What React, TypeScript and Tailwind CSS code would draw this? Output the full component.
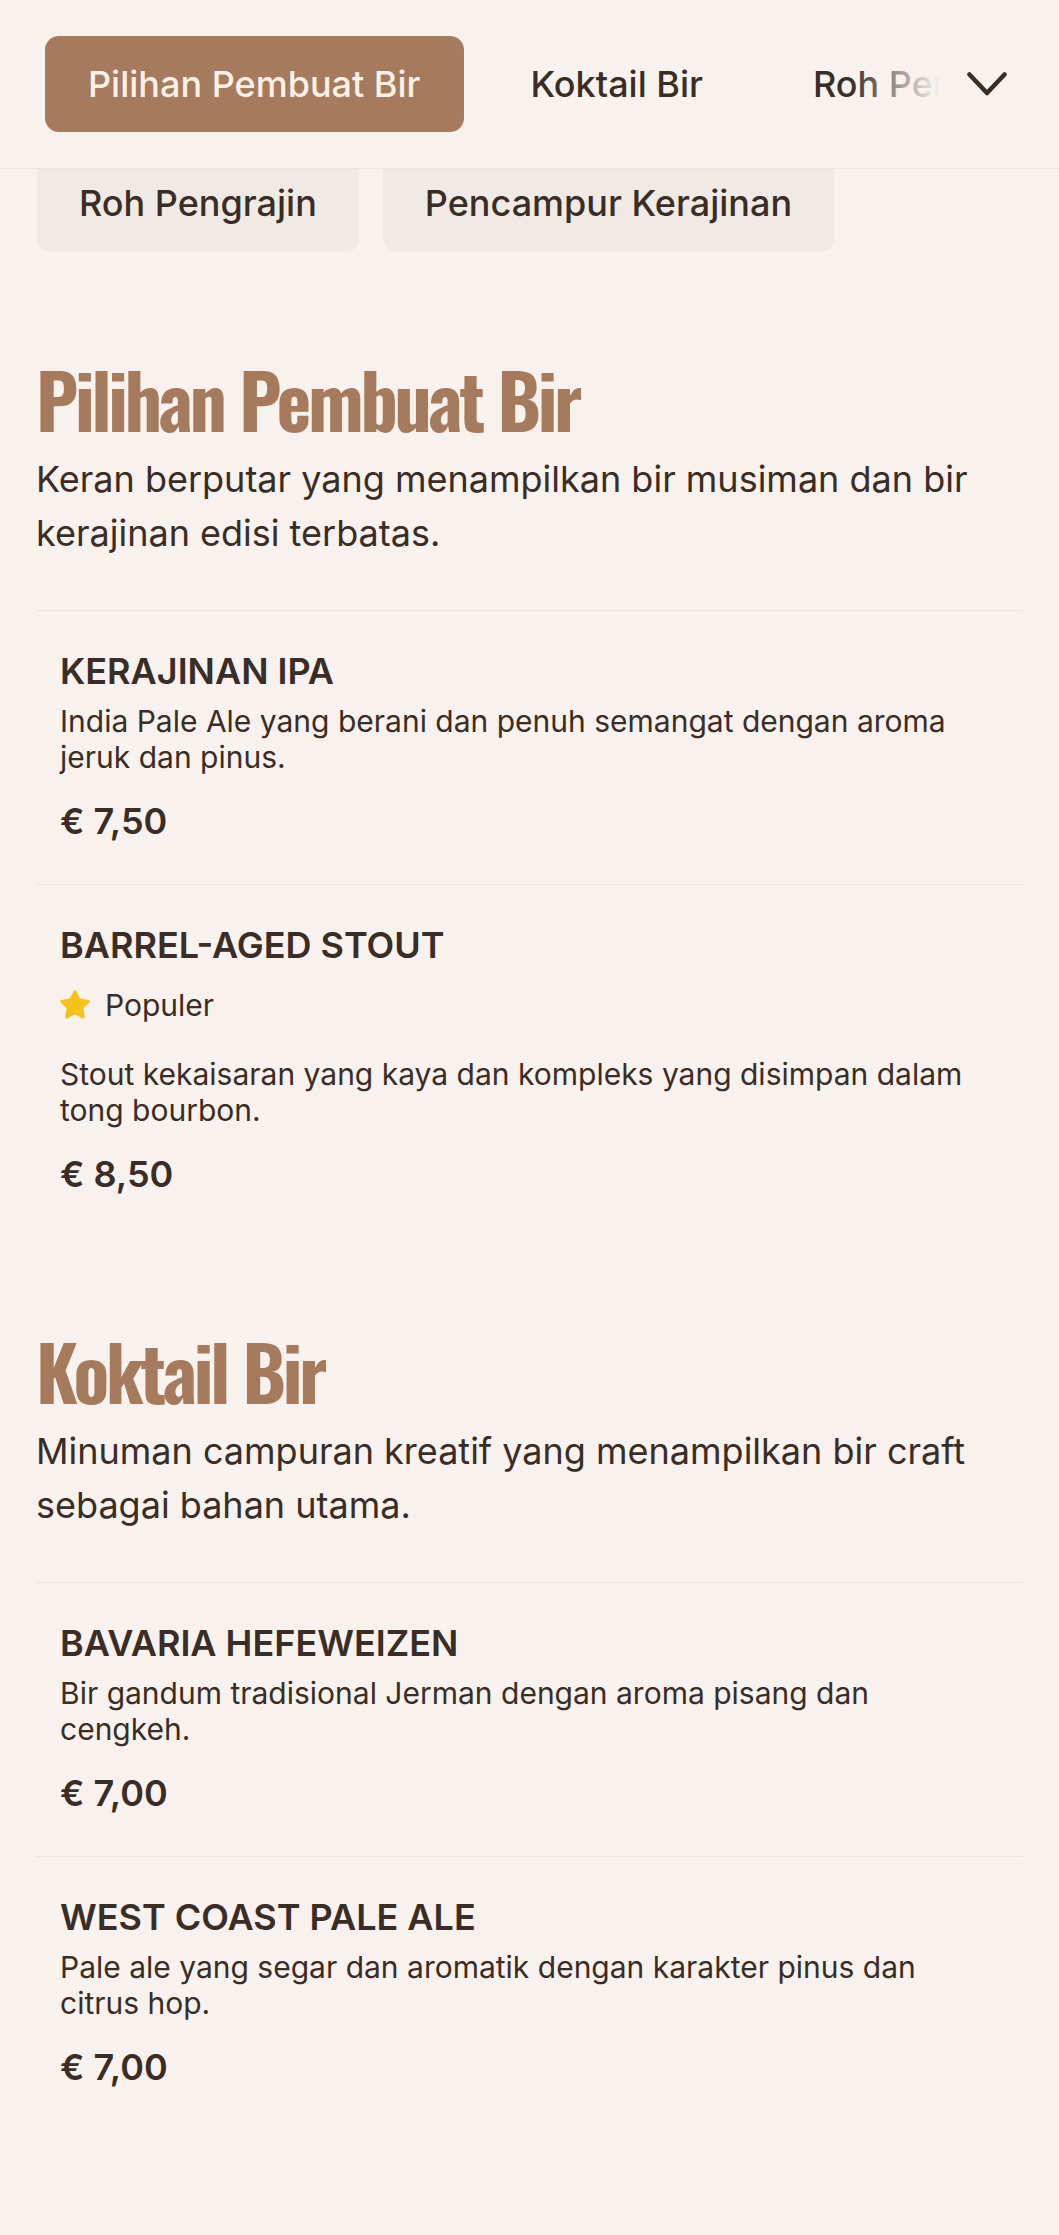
import { Star } from 'lucide-react';

const navItems = ['Pilihan Pembuat Bir', 'Koktail Bir', 'Roh Pengrajin', 'Pencampur Kerajinan'];

interface Item {
  name: string;
  desc: string;
  price: string;
  popular?: boolean;
}

interface Section {
  title: string;
  intro: string;
  items: Item[];
}

const sections: Section[] = [
  {
    title: 'Pilihan Pembuat Bir',
    intro: 'Keran berputar yang menampilkan bir musiman dan bir kerajinan edisi terbatas.',
    items: [
      {
        name: 'KERAJINAN IPA',
        desc: 'India Pale Ale yang berani dan penuh semangat dengan aroma jeruk dan pinus.',
        price: '€ 7,50',
      },
      {
        name: 'BARREL-AGED STOUT',
        desc: 'Stout kekaisaran yang kaya dan kompleks yang disimpan dalam tong bourbon.',
        price: '€ 8,50',
        popular: true,
      },
    ],
  },
  {
    title: 'Koktail Bir',
    intro: 'Minuman campuran kreatif yang menampilkan bir craft sebagai bahan utama.',
    items: [
      {
        name: 'BAVARIA HEFEWEIZEN',
        desc: 'Bir gandum tradisional Jerman dengan aroma pisang dan cengkeh.',
        price: '€ 7,00',
      },
      {
        name: 'WEST COAST PALE ALE',
        desc: 'Pale ale yang segar dan aromatik dengan karakter pinus dan citrus hop.',
        price: '€ 7,00',
      },
    ],
  },
];

function MenuItem({ item }: { item: Item }) {
  return (
    <div className="border-t border-[#ece5df] px-6 pt-10 pb-[43px]">
      <h3 className="text-[36px] leading-[40px] font-semibold text-[#3a2d25]">{item.name}</h3>
      {item.popular && (
        <div className="flex items-center gap-[13px] mt-[22px] mb-[33px]">
          <Star size={34} className="fill-[#f5c21b] text-[#f5c21b] -ml-[2px]" strokeWidth={1} />
          <span className="text-[30px] leading-[36px] text-[#3a2d25]">Populer</span>
        </div>
      )}
      <p className="mt-3 text-[30px] leading-[36px] text-[#3a2d25]">{item.desc}</p>
      <p className="mt-[26px] text-[36px] leading-[40px] font-semibold text-[#3a2d25]">{item.price}</p>
    </div>
  );
}

export default function App() {
  return (
    <div className="min-h-screen bg-[#f7f2ee] font-['Inter','Noto_Sans',sans-serif] text-[#3a2d25]">
      <header className="relative z-10 flex items-center gap-[19px] pl-[45px] pr-[44px] py-9 bg-[#f7f2ee] border-b border-[#ede6e0]">
        <nav className="relative flex-1 min-w-0 overflow-hidden">
          <div className="flex gap-6 whitespace-nowrap">
            {navItems.map((label, i) => (
              <button
                key={label}
                className={
                  i === 0
                    ? 'h-24 shrink-0 px-[43px] rounded-[14px] bg-[#a67a5c] text-[#fcf1e8] text-[36px] font-medium'
                    : 'h-24 shrink-0 px-[43px] rounded-[14px] text-[#3a2d25] text-[36px] font-medium'
                }
              >
                {label}
              </button>
            ))}
          </div>
          <div className="pointer-events-none absolute inset-y-0 right-0 w-[90px] bg-gradient-to-r from-[#f7f2ee]/0 to-[#f7f2ee]" />
        </nav>
        <button className="w-14 h-14 flex items-center justify-center text-[#3a2d25]">
          <svg width="40" height="24" viewBox="0 0 40 24" fill="none" stroke="currentColor" strokeWidth="4.5" strokeLinecap="round" strokeLinejoin="round">
            <polyline points="2.5,2.5 20,21 37.5,2.5" />
          </svg>
        </button>
      </header>

      <div className="-mt-[14px] flex gap-6 px-[37px]">
        {navItems.slice(2).map((label) => (
          <button
            key={label}
            className="h-24 px-[42px] rounded-[14px] bg-[#f0eae5] text-[36px] font-medium text-[#3a2d25] shadow-[0_1px_2px_rgba(60,40,30,0.04)]"
          >
            {label}
          </button>
        ))}
      </div>

      <main className="px-9 pb-16">
        {sections.map((section, si) => (
          <section key={section.title} className={si === 0 ? 'pt-[108px]' : 'pt-[94px]'}>
            <h2 className="font-['Oswald','Roboto_Condensed','Liberation_Sans_Narrow','DejaVu_Sans_Condensed',sans-serif] text-[74px] leading-[80px] font-bold tracking-[-0.045em] text-[#a67a5c]">
              {section.title}
            </h2>
            <p className="mt-[13px] mb-[50px] text-[36px] leading-[54px] text-[#3a2d25]">{section.intro}</p>
            <div>
              {section.items.map((item) => (
                <MenuItem key={item.name} item={item} />
              ))}
            </div>
          </section>
        ))}
      </main>
    </div>
  );
}
